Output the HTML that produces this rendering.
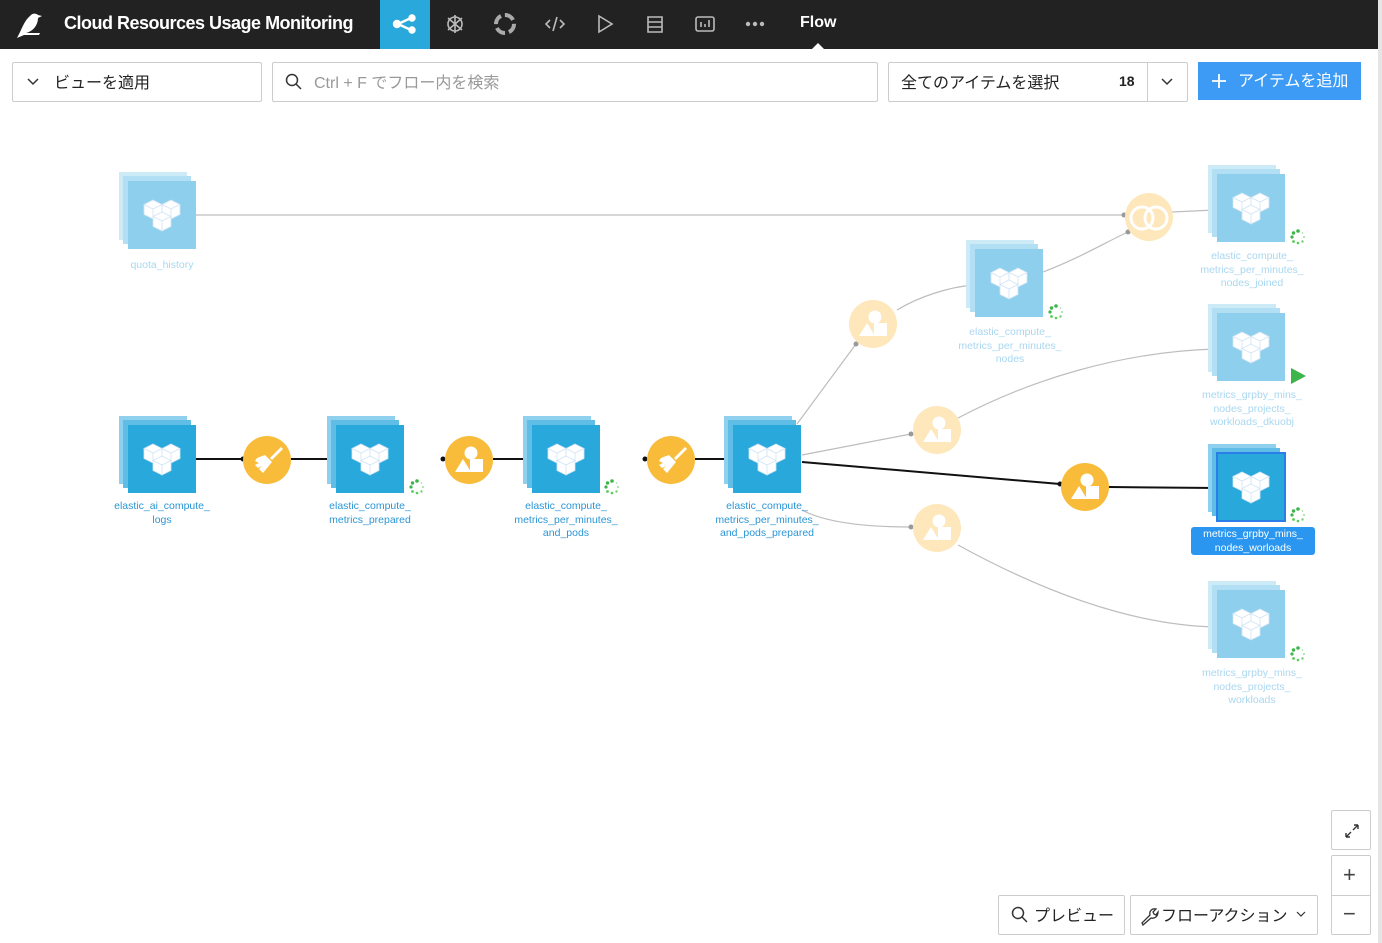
<!DOCTYPE html>
<html><head><meta charset="utf-8">
<style>
*{box-sizing:border-box;margin:0;padding:0}
body{width:1382px;height:943px;overflow:hidden;background:#fff;font-family:"Liberation Sans","Noto Sans CJK JP",sans-serif;position:relative}
.top{position:absolute;left:0;top:0;width:1382px;height:49px;background:#222}
.title{position:absolute;left:64px;top:13px;color:#fff;font-size:18px;font-weight:bold;letter-spacing:-0.5px}
.tab{position:absolute;top:0;width:50px;height:49px}
.box{position:absolute;border:1px solid #ccc;border-radius:2px;background:#fff;font-size:16px;color:#222}
.btn{position:absolute;background:#3d9bf5;color:#fff;font-size:16px}
.lbl{position:absolute;font-size:10.5px;line-height:13.5px;text-align:center;color:#2a96d6;width:140px}
.f{color:#a9d7f0}
.t{position:absolute;top:9px;line-height:24px}
</style></head><body>
<div class="top"></div>
<svg style="position:absolute;left:14px;top:11px" width="30" height="28" viewBox="0 0 30 28"><path d="M3 27 C8 18 10 10 16 5 C18 2 22 2 24 4 L28 5 L24 7 C24 13 20 20 12 22 L26 22 L25 24 L10 24 Z" fill="#fff"/></svg>
<div class="title">Cloud Resources Usage Monitoring</div>
<div class="tab" style="left:380px;background:#29a8dc"></div>
<svg style="position:absolute;left:380px;top:0" width="480" height="49" viewBox="0 0 480 49" fill="none" stroke="#bbb" stroke-width="1.6">
<g stroke="#fff" stroke-width="2.4" fill="#fff"><path d="M18 24 L31 18 M18 24 L31 30"/><circle cx="17" cy="24" r="3"/><circle cx="32" cy="18" r="2.5"/><circle cx="32" cy="30" r="2.5"/></g>
<circle cx="75" cy="24" r="7"/><path d="M68 18 L82 30 M82 18 L68 30 M75 15 L75 33"/>
<circle cx="125" cy="24" r="9" stroke-width="4" stroke="#aaa" stroke-dasharray="10 4"/>
<path d="M170 20 L166 24 L170 28 M180 20 L184 24 L180 28 M177 17 L173 31"/>
<path d="M219 16 L232 24 L219 32 Z"/>
<path d="M268 17 h14 v15 h-14 Z M268 22 h14 M268 27 h14"/>
<rect x="316" y="17" width="18" height="14" rx="2"/><path d="M321 27 v-5 M325 27 v-3 M329 27 v-7"/>
<g fill="#bbb" stroke="none"><circle cx="368" cy="24" r="2.2"/><circle cx="375" cy="24" r="2.2"/><circle cx="382" cy="24" r="2.2"/></g>
</svg>
<div style="position:absolute;left:800px;top:14px;color:#fff;font-size:16px;font-weight:bold">Flow</div>
<div style="position:absolute;left:812px;top:43px;width:0;height:0;border-left:6px solid transparent;border-right:6px solid transparent;border-bottom:6px solid #fff"></div>

<div class="box" style="left:12px;top:62px;width:250px;height:40px"><svg style="position:absolute;left:13px;top:13px" width="14" height="12" fill="none" stroke="#333" stroke-width="1.5"><path d="M2 3 L7 8 L12 3"/></svg><span class="t" style="left:41px">ビューを適用</span></div>
<div class="box" style="left:272px;top:62px;width:606px;height:40px"><svg style="position:absolute;left:12px;top:10px" width="18" height="18"><circle cx="7" cy="7" r="5.5" fill="none" stroke="#333" stroke-width="1.5"/><path d="M11 11 L16 16" stroke="#333" stroke-width="1.5"/></svg><span class="t" style="left:41px;color:#999">Ctrl + F でフロー内を検索</span></div>
<div class="box" style="left:888px;top:62px;width:300px;height:40px"><span class="t" style="left:12px">全てのアイテムを選択</span><span style="position:absolute;left:230px;top:10px;font-size:14px;font-weight:bold">18</span><div style="position:absolute;left:258px;top:0;width:1px;height:38px;background:#ccc"></div><svg style="position:absolute;left:271px;top:13px" width="14" height="12" fill="none" stroke="#333" stroke-width="1.5"><path d="M2 3 L7 8 L12 3"/></svg></div>
<div class="btn" style="left:1198px;top:62px;width:163px;height:38px"><svg style="position:absolute;left:13px;top:11px" width="16" height="16" stroke="#fff" stroke-width="1.8"><path d="M8 1 V15 M1 8 H15"/></svg><span class="t" style="left:40px;top:8px">アイテムを追加</span></div>
<div style="position:absolute;left:1378px;top:0;width:4px;height:943px;background:#e5e5e5"></div>

<svg style="position:absolute;left:0;top:0" width="1382" height="943">
<defs>
<g id="cube"><path d="M0 -9 L9 -4.5 L0 0 L-9 -4.5 Z M-9 -4.5 L0 0 L0 10 L-9 5.5 Z M0 0 L9 -4.5 L9 5.5 L0 10 Z" fill="#fff" stroke="#cfe4f5" stroke-width="0.8"/></g>
<g id="cubes"><use href="#cube" x="-9" y="-6"/><use href="#cube" x="9" y="-6"/><use href="#cube" x="0" y="6"/></g>
<g id="ds"><rect x="-43" y="-43" width="68" height="68" fill="#8ed0ee"/><rect x="-39" y="-39" width="68" height="68" fill="#5fbde6"/><rect x="-34" y="-34" width="68" height="68" fill="#29a8dc"/><use href="#cubes"/></g>
<g id="dsf"><rect x="-43" y="-43" width="68" height="68" fill="#cdeaf7"/><rect x="-39" y="-39" width="68" height="68" fill="#b2dff3"/><rect x="-34" y="-34" width="68" height="68" fill="#8dcfed"/><use href="#cubes"/></g>
<g id="shp" fill="#fff"><circle cx="2" cy="-7" r="6.5"/><path d="M-14 12 L-6 -1 L2 12 Z"/><rect x="1" y="-1" width="13" height="13"/></g>
<g id="broom" fill="#fff"><path d="M3 -2 L14 -13 L16 -11 L5 0 Z"/><path d="M-2 -5 L5 2 L-4 13 L-8 9 L-5 6 L-9 8 L-12 5 L-8 3 L-12 1 L-10 -2 Z"/></g>
<g id="spin"><circle cx="0" cy="-6" r="1.8" fill="#3cb54a"/><circle cx="-4.5" cy="-4" r="1.7" fill="#3cb54a"/><circle cx="-6" cy="0" r="1.6" fill="#3cb54a"/><circle cx="-4.5" cy="4.5" r="1.4" fill="#5c5"/><circle cx="0" cy="6" r="1.3" fill="#5c5"/><circle cx="4.5" cy="4.5" r="1.2" fill="#7c7"/><circle cx="6" cy="0" r="1" fill="#9d9"/><circle cx="4.5" cy="-4" r="0.8" fill="#9d9"/></g>
</defs>
<g fill="none" stroke="#bdbdbd" stroke-width="1.2">
<path d="M196 215 L1124 215"/>
<path d="M1043 272 C1080 258 1110 240 1128 232"/>
<path d="M1172 212 L1215 210"/>
<path d="M797 424 L856 344"/>
<path d="M897 310 C920 296 950 287 973 285"/>
<path d="M802 455 L911 434"/>
<path d="M958 418 C1030 380 1120 352 1215 349"/>
<path d="M802 510 C830 525 880 527 911 527"/>
<path d="M958 545 C1040 590 1130 625 1215 627"/>
</g>
<g fill="#999"><circle cx="1124" cy="215" r="2.5"/><circle cx="1128" cy="232" r="2.5"/><circle cx="1215" cy="210" r="2.5"/><circle cx="973" cy="285" r="2.5"/><circle cx="856" cy="344" r="2.5"/><circle cx="911" cy="434" r="2.5"/><circle cx="1215" cy="349" r="2.5"/><circle cx="911" cy="527" r="2.5"/><circle cx="1215" cy="627" r="2.5"/></g>
<g stroke="#111" stroke-width="2" fill="none">
<path d="M196 459 L243 459 M291 459 L336 459 M493 459 L532 459 M695 459 L733 459 M802 462 L1060 484 M1109 487 L1217 488"/>
</g>
<g fill="#111"><circle cx="243" cy="459" r="2.5"/><circle cx="443" cy="459" r="2.5"/><circle cx="645" cy="459" r="2.5"/><circle cx="1060" cy="484" r="2.5"/></g>

<use href="#dsf" x="162" y="215"/>
<use href="#ds" x="162" y="459"/>
<use href="#ds" x="370" y="459"/>
<use href="#ds" x="566" y="459"/>
<use href="#ds" x="767" y="459"/>
<use href="#dsf" x="1009" y="283"/>
<use href="#dsf" x="1251" y="208"/>
<use href="#dsf" x="1251" y="347"/>
<use href="#ds" x="1251" y="487"/>
<rect x="1217" y="453" width="68" height="68" fill="none" stroke="#2b7de9" stroke-width="2"/>
<use href="#dsf" x="1251" y="624"/>

<circle cx="267" cy="460" r="24" fill="#f8bc3a"/><use href="#broom" x="267" y="460"/>
<circle cx="469" cy="460" r="24" fill="#f8bc3a"/><use href="#shp" x="469" y="460"/>
<circle cx="671" cy="460" r="24" fill="#f8bc3a"/><use href="#broom" x="671" y="460"/>
<circle cx="1085" cy="487" r="24" fill="#f8bc3a"/><use href="#shp" x="1085" y="487"/>
<circle cx="873" cy="324" r="24" fill="#fde7bb"/><use href="#shp" x="873" y="324"/>
<circle cx="937" cy="430" r="24" fill="#fde7bb"/><use href="#shp" x="937" y="430"/>
<circle cx="937" cy="528" r="24" fill="#fde7bb"/><use href="#shp" x="937" y="528"/>
<circle cx="1149" cy="217" r="24" fill="#fde7bb"/>
<circle cx="1142" cy="218" r="11" fill="none" stroke="#fff" stroke-width="3"/><circle cx="1156" cy="218" r="11" fill="none" stroke="#fff" stroke-width="3"/>

<use href="#spin" x="417" y="487"/>
<use href="#spin" x="612" y="487"/>
<use href="#spin" x="1056" y="312"/>
<use href="#spin" x="1298" y="237"/>
<use href="#spin" x="1298" y="515"/>
<use href="#spin" x="1298" y="654"/>
<path d="M1291 368 L1306 376 L1291 384 Z" fill="#3cb54a"/>
</svg>

<div class="lbl f" style="left:92px;top:259px">quota_history</div>
<div class="lbl" style="left:92px;top:500px">elastic_ai_compute_<br>logs</div>
<div class="lbl" style="left:300px;top:500px">elastic_compute_<br>metrics_prepared</div>
<div class="lbl" style="left:496px;top:500px">elastic_compute_<br>metrics_per_minutes_<br>and_pods</div>
<div class="lbl" style="left:697px;top:500px">elastic_compute_<br>metrics_per_minutes_<br>and_pods_prepared</div>
<div class="lbl f" style="left:940px;top:326px">elastic_compute_<br>metrics_per_minutes_<br>nodes</div>
<div class="lbl f" style="left:1182px;top:250px">elastic_compute_<br>metrics_per_minutes_<br>nodes_joined</div>
<div class="lbl f" style="left:1182px;top:389px">metrics_grpby_mins_<br>nodes_projects_<br>workloads_dkuobj</div>
<div style="position:absolute;left:1191px;top:527px;width:124px;height:28px;background:#2b96ef;border-radius:3px;color:#fff;font-size:10.5px;line-height:13.5px;text-align:center;padding-top:1px">metrics_grpby_mins_<br>nodes_worloads</div>
<div class="lbl f" style="left:1182px;top:667px">metrics_grpby_mins_<br>nodes_projects_<br>workloads</div>

<div class="box" style="left:998px;top:895px;width:127px;height:40px"><svg style="position:absolute;left:12px;top:10px" width="18" height="18"><circle cx="7" cy="7" r="5.5" fill="none" stroke="#333" stroke-width="1.5"/><path d="M11 11 L16 16" stroke="#333" stroke-width="1.5"/></svg><span class="t" style="left:35px">プレビュー</span></div>
<div class="box" style="left:1130px;top:895px;width:188px;height:40px"><svg style="position:absolute;left:8px;top:10px" width="20" height="20" fill="none" stroke="#333" stroke-width="1.3"><path d="M3 17 L11 9 C10 5 13 2 17 3 L14 6 L15 8 L17 9 L19 6 C19 10 16 13 12 12 L4 19 Z"/></svg><span class="t" style="left:30px">フローアクション</span><svg style="position:absolute;left:164px;top:14px" width="12" height="10" fill="none" stroke="#333" stroke-width="1.2"><path d="M2 2 L6 6 L10 2"/></svg></div>
<div class="box" style="left:1331px;top:810px;width:40px;height:40px"><svg style="position:absolute;left:10px;top:10px" width="20" height="20" fill="none" stroke="#333" stroke-width="1.4"><path d="M4 16 L9 11 M4 16 v-4 M4 16 h4 M16 4 L11 9 M16 4 h-4 M16 4 v4"/></svg></div>
<div class="box" style="left:1331px;top:855px;width:40px;height:80px"><div style="position:absolute;left:0;top:39px;width:38px;height:1px;background:#ccc"></div><span style="position:absolute;left:11px;top:6px;font-size:22px;color:#444">+</span><span style="position:absolute;left:11px;top:45px;font-size:22px;color:#444">−</span></div>
</body></html>
